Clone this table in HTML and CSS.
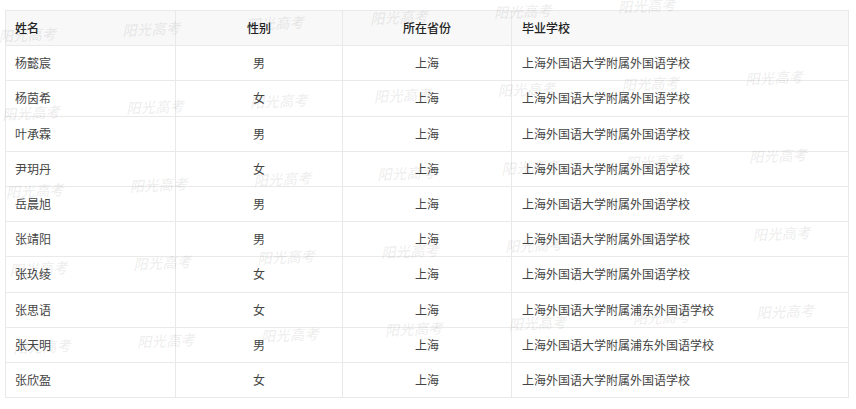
FILE: index.html
```html
<!DOCTYPE html>
<html lang="zh-CN">
<head>
<meta charset="utf-8">
<title>录取名单</title>
<link rel="stylesheet" href="styles.css">
</head>
<body>
<div class="page">
  <table class="list">
    <colgroup>
      <col class="c-name">
      <col class="c-sex">
      <col class="c-prov">
      <col class="c-school">
    </colgroup>
    <thead>
      <tr><th class="first">姓名</th><th>性别</th><th>所在省份</th><th class="left">毕业学校</th></tr>
    </thead>
    <tbody>
      <tr><td class="first">杨懿宸</td><td>男</td><td>上海</td><td class="left">上海外国语大学附属外国语学校</td></tr>
      <tr><td class="first">杨茵希</td><td>女</td><td>上海</td><td class="left">上海外国语大学附属外国语学校</td></tr>
      <tr><td class="first">叶承霖</td><td>男</td><td>上海</td><td class="left">上海外国语大学附属外国语学校</td></tr>
      <tr><td class="first">尹玥丹</td><td>女</td><td>上海</td><td class="left">上海外国语大学附属外国语学校</td></tr>
      <tr><td class="first">岳晨旭</td><td>男</td><td>上海</td><td class="left">上海外国语大学附属外国语学校</td></tr>
      <tr><td class="first">张靖阳</td><td>男</td><td>上海</td><td class="left">上海外国语大学附属外国语学校</td></tr>
      <tr><td class="first">张玖绫</td><td>女</td><td>上海</td><td class="left">上海外国语大学附属外国语学校</td></tr>
      <tr><td class="first">张思语</td><td>女</td><td>上海</td><td class="left">上海外国语大学附属浦东外国语学校</td></tr>
      <tr><td class="first">张天明</td><td>男</td><td>上海</td><td class="left">上海外国语大学附属浦东外国语学校</td></tr>
      <tr><td class="first">张欣盈</td><td>女</td><td>上海</td><td class="left">上海外国语大学附属外国语学校</td></tr>
    </tbody>
  </table>
  <div class="watermarks" aria-hidden="true">
    <span>阳光高考</span><span>阳光高考</span><span>阳光高考</span><span>阳光高考</span><span>阳光高考</span><span>阳光高考</span><span class="gone">阳光高考</span>
    <span>阳光高考</span><span>阳光高考</span><span>阳光高考</span><span>阳光高考</span><span>阳光高考</span><span>阳光高考</span><span>阳光高考</span>
    <span>阳光高考</span><span>阳光高考</span><span>阳光高考</span><span>阳光高考</span><span>阳光高考</span><span>阳光高考</span><span>阳光高考</span>
    <span>阳光高考</span><span>阳光高考</span><span>阳光高考</span><span>阳光高考</span><span>阳光高考</span><span>阳光高考</span><span>阳光高考</span>
    <span>阳光高考</span><span>阳光高考</span><span>阳光高考</span><span>阳光高考</span><span>阳光高考</span><span>阳光高考</span><span>阳光高考</span>
  </div>
</div>
</body>
</html>
```

FILE: styles.css
```css
html, body {
  margin: 0;
  padding: 0;
  background: #ffffff;
}

body {
  font-family: "Noto Sans CJK SC", "Liberation Sans", sans-serif;
  font-size: 12px;
  color: #444444;
}

.page {
  position: relative;
  padding: 10px 7px 0 5px;
  overflow: hidden;
  height: 399px;
}

.list {
  width: 844px;
  table-layout: fixed;
  border-collapse: collapse;
  border: 1px solid #e9e9e9;
}

.c-name { width: 170px; }
.c-sex { width: 167px; }
.c-prov { width: 169px; }
.c-school { width: auto; }

.list tr {
  height: 35.2px;
}

.list th,
.list td {
  border: 1px solid #e9e9e9;
  padding: 0 10px;
  text-align: center;
  vertical-align: middle;
  line-height: 16px;
  white-space: nowrap;
}

.list th {
  background: #f8f8f8;
  font-weight: 500;
  color: #222222;
}

.list td {
  font-weight: 400;
  color: #444444;
}

.list .left {
  text-align: left;
}

.list .first {
  text-align: left;
  padding-left: 9px;
}

.watermarks {
  position: absolute;
  left: -2px;
  top: 28px;
  display: grid;
  grid-template-columns: repeat(7, 124px);
  grid-auto-rows: 78px;
  transform: rotate(-2.7deg);
  transform-origin: 0 0;
  pointer-events: none;
}

.watermarks span {
  font-family: "Noto Sans CJK SC", sans-serif;
  font-size: 14.5px;
  line-height: 16px;
  font-weight: 700;
  font-style: italic;
  color: rgba(0, 0, 0, 0.065);
  white-space: nowrap;
}

.watermarks .gone {
  visibility: hidden;
}
```
